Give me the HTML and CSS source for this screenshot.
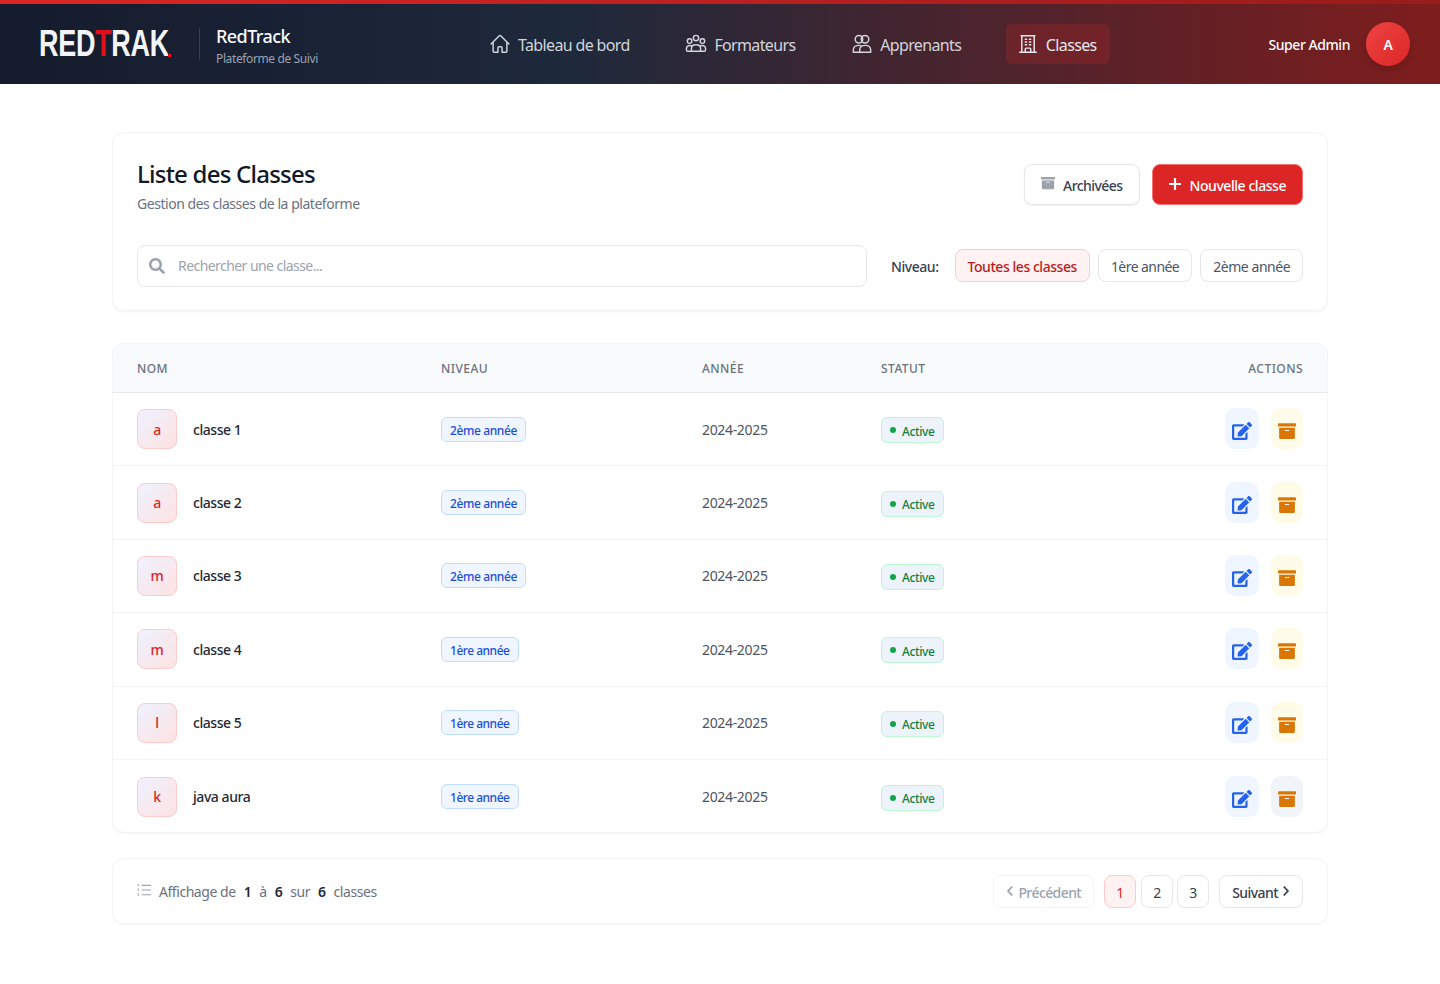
FILE: index.html
```html
<!DOCTYPE html>
<html lang="fr">
<head>
<meta charset="utf-8">
<title>RedTrack - Classes</title>
<link rel="stylesheet" href="styles.css">
</head>
<body>
<svg class="defs" aria-hidden="true">
  <symbol id="i-edit" viewBox="0 0 576 512"><path fill="currentColor" d="M402.6 83.2l90.2 90.2c3.8 3.8 3.8 10 0 13.8L274.4 405.6l-92.8 10.3c-12.4 1.4-22.9-9.1-21.5-21.5l10.3-92.8L388.8 83.2c3.8-3.8 10-3.8 13.8 0zm162-22.9l-48.8-48.8c-15.2-15.2-39.9-15.2-55.2 0l-35.4 35.4c-3.8 3.8-3.8 10 0 13.8l90.2 90.2c3.8 3.8 10 3.8 13.8 0l35.4-35.4c15.2-15.3 15.2-40 0-55.2zM384 346.2V448H64V128h229.8c3.2 0 6.2-1.3 8.5-3.5l40-40c7.6-7.6 2.2-20.5-8.5-20.5H48C21.5 64 0 85.5 0 112v352c0 26.5 21.5 48 48 48h352c26.5 0 48-21.5 48-48V306.2c0-10.7-12.9-16-20.5-8.5l-40 40c-2.2 2.3-3.5 5.3-3.5 8.5z"/></symbol>
  <symbol id="i-archive" viewBox="0 0 512 512"><path fill="currentColor" d="M32 448c0 17.7 14.3 32 32 32h384c17.7 0 32-14.3 32-32V160H32v288zm160-212c0-6.6 5.4-12 12-12h104c6.6 0 12 5.4 12 12v8c0 6.6-5.4 12-12 12H204c-6.6 0-12-5.4-12-12v-8zM480 32H32C14.3 32 0 46.3 0 64v48c0 8.8 7.2 16 16 16h480c8.8 0 16-7.2 16-16V64c0-17.7-14.3-32-32-32z"/></symbol>
  <symbol id="i-left" viewBox="0 0 10 16"><path fill="none" stroke="currentColor" stroke-width="2.4" d="M8 2 2.500 8 8 14"/></symbol>
  <symbol id="i-right" viewBox="0 0 10 16"><path fill="none" stroke="currentColor" stroke-width="2.4" d="M2 2l5.500 6L2 14"/></symbol>
</svg>

<header class="topbar">
  <div class="brand">
    <div class="logo" aria-label="RedTrak"><div class="logo-word"><span>RED</span><span class="logo-t">T</span><span>RAK</span></div><i class="logo-dot"></i></div>
    <div class="brand-text">
      <div class="brand-name">RedTrack</div>
      <div class="brand-sub">Plateforme de Suivi</div>
    </div>
  </div>
  <nav class="nav">
    <a class="nav-item">
      <svg class="nav-icon" viewBox="0 0 24 24"><path d="M2.250 12l8.954-8.955c.44-.439 1.152-.439 1.591 0L21.750 12M4.500 9.750v10.125c0 .621.504 1.125 1.125 1.125H9.750v-4.875c0-.621.504-1.125 1.125-1.125h2.250c.621 0 1.125.504 1.125 1.125V21h4.125c.621 0 1.125-.504 1.125-1.125V9.750"/></svg>
      <span>Tableau de bord</span></a>
    <a class="nav-item">
      <svg class="nav-icon" viewBox="0 0 24 24"><circle cx="12" cy="5.500" r="2.900"/><circle cx="5" cy="8.800" r="2.500"/><circle cx="19" cy="8.800" r="2.500"/><path d="M7 20v-3.200c0-2.500 2-4 5-4s5 1.500 5 4V20zM7 20H3c-.8 0-1.400-.6-1.400-1.400v-1.600c0-2 1.500-3.300 3.700-3.300.9 0 1.700.2 2.400.6M17 20h4c.8 0 1.400-.6 1.400-1.400v-1.600c0-2-1.500-3.300-3.700-3.300-.9 0-1.700.2-2.400.6"/></svg>
      <span>Formateurs</span></a>
    <a class="nav-item">
      <svg class="nav-icon" viewBox="0 0 24 24"><circle cx="8.700" cy="6.800" r="4.100"/><circle cx="15.300" cy="6.800" r="4.100"/><path d="M2.500 21v-2.500c0-3 2.600-5 6-5 1.300 0 2.500.3 3.500.9M21.500 21v-2.500c0-3-2.600-5-6-5-3.400 0-6 2-6 5V21M2.500 21h19"/></svg>
      <span>Apprenants</span></a>
    <a class="nav-item is-active">
      <svg class="nav-icon" viewBox="0 0 24 24"><path d="M3 21h18M4.500 3h15M5.250 3v18M18.750 3v18M9 6.750h1.500M9 9.750h1.500M9 12.750h1.500M13.500 6.750H15M13.500 9.750H15M13.500 12.750H15M9 21v-3.375c0-.621.504-1.125 1.125-1.125h3.750c.621 0 1.125.504 1.125 1.125V21"/></svg>
      <span>Classes</span></a>
  </nav>
  <div class="user">
    <span class="user-name">Super Admin</span>
    <span class="avatar">A</span>
  </div>
</header>

<main class="page">
  <section class="card head-card">
    <div class="head-top">
      <div>
        <h1 class="title">Liste des Classes</h1>
        <p class="subtitle">Gestion des classes de la plateforme</p>
      </div>
      <div class="head-actions">
        <button class="btn btn-ghost"><svg class="btn-icon"><use href="#i-archive"/></svg><span>Archivées</span></button>
        <button class="btn btn-primary"><svg class="plus" viewBox="0 0 14 14"><path d="M7 1v12M1 7h12"/></svg><span>Nouvelle classe</span></button>
      </div>
    </div>
    <div class="filters">
      <div class="search">
        <svg class="search-icon" viewBox="0 0 512 512"><path fill="currentColor" d="M505 442.700L405.300 343c-4.500-4.500-10.600-7-17-7H372c27.600-35.300 44-79.700 44-128C416 93.100 322.900 0 208 0S0 93.100 0 208s93.100 208 208 208c48.300 0 92.700-16.400 128-44v16.300c0 6.400 2.500 12.500 7 17l99.700 99.700c9.400 9.400 24.600 9.400 33.900 0l28.300-28.300c9.400-9.400 9.400-24.600.1-34zM208 336c-70.700 0-128-57.200-128-128 0-70.700 57.200-128 128-128 70.700 0 128 57.200 128 128 0 70.700-57.200 128-128 128z"/></svg>
        <span>Rechercher une classe...</span>
      </div>
      <span class="filter-label">Niveau:</span>
      <button class="chip chip-on">Toutes les classes</button>
      <button class="chip tight">1ère année</button>
      <button class="chip">2ème année</button>
    </div>
  </section>

  <section class="card table-card">
    <div class="row row-head">
      <div>NOM</div><div>NIVEAU</div><div>ANNÉE</div><div>STATUT</div><div class="right">ACTIONS</div>
    </div>

    <div class="row">
      <div class="name"><span class="initial">a</span>classe 1</div>
      <div><span class="level">2ème année</span></div>
      <div class="year">2024-2025</div>
      <div><span class="status"><i class="dot"></i>Active</span></div>
      <div class="actions">
        <button class="act act-edit"><svg><use href="#i-edit"/></svg></button>
        <button class="act act-arch"><svg><use href="#i-archive"/></svg></button>
      </div>
    </div>
    <div class="row">
      <div class="name"><span class="initial">a</span>classe 2</div>
      <div><span class="level">2ème année</span></div>
      <div class="year">2024-2025</div>
      <div><span class="status"><i class="dot"></i>Active</span></div>
      <div class="actions">
        <button class="act act-edit"><svg><use href="#i-edit"/></svg></button>
        <button class="act act-arch"><svg><use href="#i-archive"/></svg></button>
      </div>
    </div>
    <div class="row">
      <div class="name"><span class="initial">m</span>classe 3</div>
      <div><span class="level">2ème année</span></div>
      <div class="year">2024-2025</div>
      <div><span class="status"><i class="dot"></i>Active</span></div>
      <div class="actions">
        <button class="act act-edit"><svg><use href="#i-edit"/></svg></button>
        <button class="act act-arch"><svg><use href="#i-archive"/></svg></button>
      </div>
    </div>
    <div class="row">
      <div class="name"><span class="initial">m</span>classe 4</div>
      <div><span class="level tight">1ère année</span></div>
      <div class="year">2024-2025</div>
      <div><span class="status"><i class="dot"></i>Active</span></div>
      <div class="actions">
        <button class="act act-edit"><svg><use href="#i-edit"/></svg></button>
        <button class="act act-arch"><svg><use href="#i-archive"/></svg></button>
      </div>
    </div>
    <div class="row">
      <div class="name"><span class="initial">l</span>classe 5</div>
      <div><span class="level tight">1ère année</span></div>
      <div class="year">2024-2025</div>
      <div><span class="status"><i class="dot"></i>Active</span></div>
      <div class="actions">
        <button class="act act-edit"><svg><use href="#i-edit"/></svg></button>
        <button class="act act-arch"><svg><use href="#i-archive"/></svg></button>
      </div>
    </div>
    <div class="row row-last">
      <div class="name"><span class="initial">k</span>java aura</div>
      <div><span class="level tight">1ère année</span></div>
      <div class="year">2024-2025</div>
      <div><span class="status"><i class="dot"></i>Active</span></div>
      <div class="actions">
        <button class="act act-edit"><svg><use href="#i-edit"/></svg></button>
        <button class="act act-arch act-hover"><svg><use href="#i-archive"/></svg></button>
      </div>
    </div>
  </section>

  <section class="card pager-card">
    <div class="count">
      <svg class="list-icon" viewBox="0 0 16 14"><path d="M5 2h10M5 7h10M5 12h10"/><path class="list-marks" d="M1.500 0.500v3M1.500 5.500v3M1.500 10.500v3"/></svg>
      <span>Affichage de</span><b>1</b><span>à</span><b>6</b><span>sur</span><b>6</b><span>classes</span>
    </div>
    <div class="pager">
      <button class="pg pg-wide pg-off"><svg class="chev"><use href="#i-left"/></svg><span>Précédent</span></button>
      <div class="pg-nums">
        <button class="pg pg-num pg-on">1</button>
        <button class="pg pg-num">2</button>
        <button class="pg pg-num">3</button>
      </div>
      <button class="pg pg-wide pg-next"><span>Suivant</span><svg class="chev"><use href="#i-right"/></svg></button>
    </div>
  </section>
</main>
</body>
</html>
```

FILE: styles.css
```css
* { box-sizing: border-box; letter-spacing: -0.032em; }
html, body { margin: 0; padding: 0; }
body {
  background: #fff;
  color: #111827;
  font-family: "Noto Sans", "Open Sans", sans-serif;
  font-size: 14px;
  height: 984px;
  overflow: hidden;
}
button { font-family: inherit; cursor: pointer; }
.defs { display: none; }
.tight { letter-spacing: -.04em; }

/* top bar */
.topbar {
  height: 84px;
  display: flex;
  align-items: center;
  padding: 4px 30px 0 40px;
  position: relative;
  background: linear-gradient(90deg, #141b2d 0%, #1e293b 40%, #7f1d1d 100%);
}
.topbar::before {
  content: "";
  position: absolute;
  left: 0; right: 0; top: 0;
  height: 4px;
  background: linear-gradient(90deg, #dc2626, #991b1b);
}
.brand { display: flex; align-items: center; width: 438px; flex: none; }
.logo {
  position: relative;
  width: 131px;
  height: 36px;
  margin-right: 28px;
  flex: none;
}
.logo-word {
  display: flex;
  margin-left: -1px;
  font-family: "Liberation Sans", sans-serif;
  font-weight: 700;
  font-size: 36px;
  line-height: 36px;
  color: #f3f4f6;
  white-space: nowrap;
  transform: scaleX(.75);
  transform-origin: left center;
}
.logo-word span { letter-spacing: -.4px; }
.logo-word .logo-t { color: #e3101a; }
.logo-dot {
  position: absolute;
  right: 0; bottom: 5px;
  width: 3px; height: 3px;
  background: #e3101a;
}
.brand-text {
  border-left: 1px solid #374151;
  padding-left: 16px;
  height: 32px;
  display: flex;
  flex-direction: column;
  justify-content: center;
}
.brand-name {
  color: #f9fafb;
  font-size: 18px;
  font-weight: 500;
  line-height: 24px;
  padding-top: 3px;
  box-sizing: content-box;
}
.brand-sub {
  color: #9ca3af;
  font-size: 12px;
  line-height: 16px;
  margin-top: 3px;
}
.nav { display: flex; align-items: center; gap: 31.700px; flex: 1; }
.nav-item {
  display: flex;
  align-items: center;
  gap: 9px;
  height: 40px;
  padding: 0 13px;
  border-radius: 6px;
  color: #d1d5db;
  font-size: 16px;
}
.nav-item span { padding-top: 2px; letter-spacing: -.04em; }
.nav-item.is-active { background: rgba(220, 38, 38, .2); color: #e5e7eb; }
.nav-icon {
  width: 22px; height: 22px;
  margin: 0 -2px;
  fill: none;
  stroke: currentColor;
  stroke-width: 1.600;
  stroke-linecap: round;
  stroke-linejoin: round;
}
.user { display: flex; align-items: center; gap: 16px; }
.user-name { color: #f9fafb; font-size: 14px; font-weight: 500; }
.avatar {
  width: 44px; height: 44px;
  border-radius: 50%;
  display: flex;
  align-items: center;
  justify-content: center;
  color: #fff;
  font-size: 14px;
  font-weight: 600;
  background: linear-gradient(135deg, #ef4444, #dc2626);
  box-shadow: 0 4px 6px rgba(0, 0, 0, .12);
}

/* page */
.page {
  width: 1216px;
  margin: 48px auto 0;
  display: flex;
  flex-direction: column;
}
.card {
  background: #fff;
  border: 1px solid #f3f4f6;
  border-radius: 12px;
  box-shadow: 0 1px 2px rgba(0, 0, 0, .04);
}
.head-card { height: 179px; padding: 23px 24px 0; }
.head-top { display: flex; justify-content: space-between; align-items: flex-start; }
.title {
  margin: 0;
  font-size: 24px;
  font-weight: 500;
  line-height: 36px;
  color: #111827;
}
.subtitle { margin: 2px 0 0; font-size: 14px; line-height: 20px; color: #6b7280; letter-spacing: -.033em; }
.head-actions { display: flex; gap: 12px; margin-top: 8px; }
.btn {
  height: 41px;
  display: flex;
  align-items: center;
  border-radius: 8px;
  font-size: 14px;
  font-weight: 500;
  padding: 0 16px;
}
.btn span { padding-top: 2px; }
.btn-ghost {
  background: #fff;
  color: #374151;
  border: 1px solid #e5e7eb;
  gap: 8px;
  box-shadow: 0 1px 2px rgba(0, 0, 0, .06);
}
.btn-ghost span { letter-spacing: -.04em; }
.btn-icon { width: 14px; height: 14px; color: #9ca3af; margin-top: -4px; }
.btn-primary {
  background: #dc2626;
  color: #fff;
  border: 1px solid #f87171;
  gap: 8px;
  padding: 0 16px 0 15px;
}
.plus { width: 14px; height: 14px; fill: none; stroke: #fff; stroke-width: 2.200; margin-top: -2px; }

.filters { display: flex; align-items: center; margin-top: 31px; }
.search {
  width: 730px;
  height: 42px;
  border: 1px solid #e5e7eb;
  border-radius: 8px;
  display: flex;
  align-items: center;
  padding-left: 11px;
  gap: 13px;
  font-size: 14px;
  color: #9ca3af;
  margin-right: 24px;
  flex: none;
}
.search span { letter-spacing: -.04em; padding-bottom: 2px; }
.search-icon { width: 16px; height: 16px; color: #9ca3af; flex: none; }
.filter-label { font-weight: 500; color: #374151; margin-right: 16px; white-space: nowrap; }
.chip {
  height: 33px;
  padding: 2px 12px 0;
  border: 1px solid #e5e7eb;
  border-radius: 8px;
  background: #fff;
  color: #4b5563;
  font-size: 14px;
  margin: -1px 8px 0 0;
  white-space: nowrap;
  flex: none;
}
.chip:last-child { margin-right: 0; }
.chip-on {
  background: #fef2f2;
  border-color: #fecaca;
  color: #b91c1c;
  font-weight: 500;
}

/* table */
.table-card { margin-top: 32px; height: 490px; overflow: hidden; }
.row {
  display: grid;
  grid-template-columns: 304px 261px 179px 1fr 200px;
  align-items: center;
  height: 73.400px;
  padding: 0 24px;
  border-bottom: 1px solid #f3f4f6;
}
.row > div:nth-child(1) { margin-right: -24px; }
.row-last { border-bottom: 0; }
.row-head {
  height: 49px;
  background: #f9fafb;
  border-bottom: 1px solid #e5e7eb;
  font-size: 12px;
  font-weight: 500;
  color: #6b7280;
}
.row-head > div { letter-spacing: .45px; }
.right { text-align: right; }
.name { display: flex; align-items: center; gap: 16px; font-weight: 500; color: #1f2937; font-size: 14px; }
.initial {
  width: 40px; height: 40px;
  border-radius: 8px;
  border: 1px solid #fecaca;
  background: linear-gradient(135deg, #eef2ff, #fee2e2);
  display: flex;
  align-items: center;
  justify-content: center;
  color: #dc2626;
  font-size: 14px;
}
.level {
  display: inline-block;
  height: 25px;
  line-height: 25px;
  padding: 0 8px;
  border: 1px solid #bfdbfe;
  border-radius: 6px;
  background: #eff6ff;
  color: #1d4ed8;
  font-size: 12px;
  font-weight: 500;
}
.year { color: #4b5563; font-size: 14px; letter-spacing: -.024em; }
.status {
  display: inline-flex;
  align-items: center;
  gap: 6px;
  height: 26px;
  margin-top: 2px;
  padding: 2px 8px 0;
  border: 1px solid #bbf7d0;
  border-radius: 6px;
  background: #ecf3fb;
  color: #15803d;
  font-size: 12px;
  font-weight: 500;
}
.dot { width: 6px; height: 6px; border-radius: 50%; background: #16a34a; margin-top: -2px; }
.actions { display: flex; justify-content: flex-end; gap: 12px; margin-top: -1px; }
.act {
  height: 41px;
  border: 0;
  border-radius: 10px;
  padding: 0;
  display: flex;
  align-items: center;
  justify-content: center;
}
.act svg { width: 20px; height: 18px; margin-top: 5px; }
.act-edit { width: 34px; background: #eff6ff; color: #2563eb; }
.act-arch { width: 32px; background: #fefce8; color: #d97706; }
.act-hover { background: #f1f5f9; }

/* pager */
.pager-card {
  margin-top: 25px;
  height: 66px;
  display: flex;
  align-items: center;
  justify-content: space-between;
  padding: 0 24px;
}
.count { display: flex; align-items: center; color: #6b7280; font-size: 14px; gap: 8px; }
.count b { color: #1f2937; font-weight: 600; }
.list-icon { width: 15px; height: 14px; fill: none; stroke: #9ca3af; stroke-width: 1.200; margin-top: -3px; margin-right: -1px; }
.list-marks { stroke-width: 1.500; stroke-dasharray: 1 .5; }
.pager { display: flex; align-items: center; gap: 10px; }
.pg-nums { display: flex; gap: 4px; }
.pg {
  height: 33px;
  border: 1px solid #e5e7eb;
  border-radius: 8px;
  background: #fff;
  color: #374151;
  font-size: 14px;
  font-weight: 500;
  display: flex;
  align-items: center;
  justify-content: center;
  gap: 4px;
  padding: 2px 0 0;
}
.pg-wide { padding: 0 12px; }
.pg-wide span { padding-top: 2px; }
.pg-next span { letter-spacing: -.04em; }
.pg-off span { letter-spacing: -.042em; }
.pg-num { width: 32px; font-weight: 400; }
.pg-off { color: #9ca3af; border-color: #f3f4f6; }
.pg-on { background: #fef2f2; border-color: #fecaca; color: #dc2626; margin-right: 1px; }
.chev { width: 8px; height: 12px; }
```
